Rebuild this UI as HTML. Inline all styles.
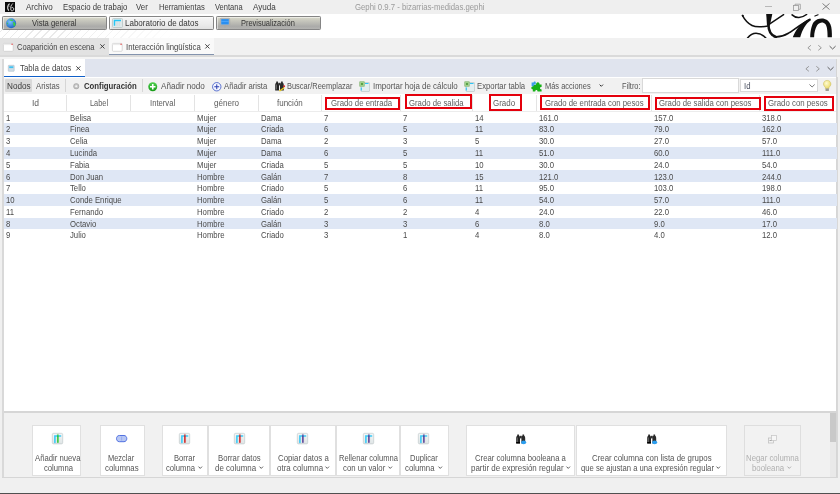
<!DOCTYPE html>
<html><head><meta charset="utf-8"><style>
html,body{margin:0;padding:0;}
body{width:840px;height:494px;position:relative;overflow:hidden;background:#f0f0f0;font-family:"Liberation Sans", sans-serif;}
</style></head><body>
<div style="position:absolute;left:0px;top:0px;width:840px;height:13.5px;background:#efefef;"></div>
<div style="position:absolute;left:0px;top:13.5px;width:840px;height:24px;background:#ffffff;"></div>
<div style="position:absolute;left:0;top:29.8px;width:215px;height:8px;background:repeating-linear-gradient(-45deg,#ffffff 0px,#ffffff 4.6px,#eaeaea 4.6px,#eaeaea 5.6px);-webkit-mask-image:linear-gradient(90deg,#000 0%,#000 25%,transparent 85%);"></div>
<div style="position:absolute;left:5px;top:2px;width:10px;height:10px;background:#0a0a0a;"></div>
<svg style="position:absolute;left:5px;top:2px;overflow:visible" width="10" height="10" viewBox="0 0 10 10"><path d="M4.6 1.6 C2.6 3.2 1.8 6.3 3.8 8.7" stroke="#d8d8d8" stroke-width="1.2" fill="none"/><path d="M7.9 1.4 C6 3 5.1 6 6 8.4 C7 9.6 8.9 8.6 8.8 6.9 C8.7 5.5 7.3 5 6.3 6" stroke="#c8c8c8" stroke-width="1" fill="none"/><path d="M2.5 4.5 L5.5 4" stroke="#999" stroke-width="0.6"/></svg>
<div style="position:absolute;left:25.87px;top:2.32px;font-size:8.6px;line-height:normal;white-space:pre;color:#3c3c3c;font-weight:400;transform-origin:0 0;transform:scaleX(0.9341)">Archivo</div>
<div style="position:absolute;left:62.67px;top:2.32px;font-size:8.6px;line-height:normal;white-space:pre;color:#3c3c3c;font-weight:400;transform-origin:0 0;transform:scaleX(0.9026)">Espacio de trabajo</div>
<div style="position:absolute;left:136.37px;top:2.32px;font-size:8.6px;line-height:normal;white-space:pre;color:#3c3c3c;font-weight:400;transform-origin:0 0;transform:scaleX(0.9195)">Ver</div>
<div style="position:absolute;left:158.78px;top:2.32px;font-size:8.6px;line-height:normal;white-space:pre;color:#3c3c3c;font-weight:400;transform-origin:0 0;transform:scaleX(0.8869)">Herramientas</div>
<div style="position:absolute;left:214.98px;top:2.32px;font-size:8.6px;line-height:normal;white-space:pre;color:#3c3c3c;font-weight:400;transform-origin:0 0;transform:scaleX(0.8762)">Ventana</div>
<div style="position:absolute;left:253.06px;top:2.32px;font-size:8.6px;line-height:normal;white-space:pre;color:#3c3c3c;font-weight:400;transform-origin:0 0;transform:scaleX(0.9447)">Ayuda</div>
<div style="position:absolute;left:355.27px;top:2.32px;font-size:8.6px;line-height:normal;white-space:pre;color:#9a9a9a;font-weight:400;transform-origin:0 0;transform:scaleX(0.9033)">Gephi 0.9.7 - bizarrias-medidas.gephi</div>
<div style="position:absolute;left:765px;top:6.3px;width:6.5px;height:0.8px;background:#b8b8b8;"></div>
<svg style="position:absolute;left:792px;top:3px;overflow:visible" width="10" height="8" viewBox="0 0 10 8"><rect x="1.5" y="2.5" width="5" height="5" fill="none" stroke="#999" stroke-width="0.8"/><path d="M3 2.5 V1.2 H8.3 V6.3 H6.5" fill="none" stroke="#999" stroke-width="0.8"/></svg>
<svg style="position:absolute;left:821.5px;top:3px;overflow:visible" width="8" height="7" viewBox="0 0 8 7"><path d="M0.5 0.5 L7.5 6.5 M7.5 0.5 L0.5 6.5" stroke="#666" stroke-width="0.8"/></svg>
<div style="position:absolute;left:2.2px;top:16.2px;width:104.5px;height:13.5px;box-sizing:border-box;border:1px solid #858585;border-radius:1.2px;background:linear-gradient(#dadacb,#c4c4bb 35%,#ababa9 78%,#b3b3b1);box-shadow:inset 1px 1px 0 rgba(255,255,255,0.5)"></div>
<div style="position:absolute;left:32.48px;top:17.82px;font-size:8.6px;line-height:normal;white-space:pre;color:#353535;font-weight:400;transform-origin:0 0;transform:scaleX(0.8868)">Vista general</div>
<div style="position:absolute;left:108.5px;top:16.2px;width:105.2px;height:13.5px;box-sizing:border-box;border:1px solid #858585;border-radius:1.2px;background:linear-gradient(#f6f6f6,#ececec 60%,#e2e2e2);box-shadow:inset 1px 1px 0 rgba(255,255,255,0.5)"></div>
<div style="position:absolute;left:124.77px;top:17.82px;font-size:8.6px;line-height:normal;white-space:pre;color:#353535;font-weight:400;transform-origin:0 0;transform:scaleX(0.9319)">Laboratorio de datos</div>
<div style="position:absolute;left:215.8px;top:16.2px;width:104.8px;height:13.5px;box-sizing:border-box;border:1px solid #858585;border-radius:1.2px;background:linear-gradient(#dadacb,#c4c4bb 35%,#ababa9 78%,#b3b3b1);box-shadow:inset 1px 1px 0 rgba(255,255,255,0.5)"></div>
<div style="position:absolute;left:241.18px;top:17.82px;font-size:8.6px;line-height:normal;white-space:pre;color:#353535;font-weight:400;transform-origin:0 0;transform:scaleX(0.8670)">Previsualización</div>
<svg style="position:absolute;left:5.6px;top:17.7px;overflow:visible" width="10.2" height="10.5" viewBox="0 0 10.2 10.5"><defs><radialGradient id="gl" cx="0.4" cy="0.35" r="0.7"><stop offset="0" stop-color="#7cc4ff"/><stop offset="1" stop-color="#1560c0"/></radialGradient></defs><circle cx="5.1" cy="5.25" r="5" fill="url(#gl)"/><path d="M3 2 C4.5 1.2 6.5 1.5 7.5 2.6 C6.5 3.2 5 3 3 2Z M7 4 C8.5 4 9.5 5 9.6 6.5 C9 8 8 8.6 7.5 8 C7.8 6.5 7 5.5 7 4Z M1 4.5 C2 4.8 2.5 5.5 2 6.5 C1.2 6 1 5.3 1 4.5Z" fill="#3fcf3f"/></svg>
<svg style="position:absolute;left:112px;top:18px;overflow:visible" width="11" height="10" viewBox="0 0 11 10"><rect x="0.5" y="0.5" width="10" height="9" rx="1" fill="#dfe9ea" stroke="#b9c4c4" stroke-width="0.8"/><path d="M2.5 7.8 V2.5 H9" stroke="#26c6f5" stroke-width="1.4" fill="none"/><path d="M5 4 V8 M7.2 4 V8" stroke="#c8d4d6" stroke-width="0.6"/></svg>
<svg style="position:absolute;left:219.9px;top:18.2px;overflow:visible" width="10" height="10.5" viewBox="0 0 10 10.5"><rect x="0.3" y="0.3" width="9.4" height="7" rx="0.8" fill="#bfbfbf" stroke="#9a9a9a" stroke-width="0.5"/><rect x="1.2" y="1.1" width="7.6" height="5.4" fill="#2a8ff0"/><path d="M1.2 3.5 H8.8" stroke="#5fb0ff" stroke-width="0.6"/><path d="M4 7.3 L4.5 9.5 H5.5 L6 7.3" fill="#a8a8a8"/></svg>
<svg style="position:absolute;left:730px;top:13.5px" width="110" height="24" viewBox="730 13.5 110 24">
<g fill="none" stroke="#111" stroke-linecap="round">
<path d="M742.4 14.9 C744.5 19 748 23 752 25 C756 27 762 26.5 768 25.5" stroke-width="1.45"/><circle cx="742.8" cy="15.2" r="1" fill="#111" stroke="none"/>
<path d="M747.6 37.5 C750 34.5 753 32.8 756 32.8 C760 32.8 763 34.5 765.8 37.5" stroke-width="1.6"/>
<path d="M768.4 20 C768 28 770 35 776 36.4" stroke-width="2.5"/><path d="M774 36.2 C782 37.2 786 34 790 31.8 C797 27 803 22 810 18.9" stroke-width="1.6"/>
<path d="M783.6 14.2 L769.4 23.6" stroke-width="1.45"/>
<path d="M792.1 14.4 C794 16.3 797 17.1 799 17 C802 16.8 804.5 15.6 806.6 14.0" stroke-width="1.5"/>
<path d="M814.9 15.6 L818.1 14.3" stroke-width="1.1"/>
</g>
<path d="M766.2 13.5 L772.3 13.5 L769.9 25 L767 25 Z" fill="#111"/>
<path d="M792.8 36.8 C795.5 30 799.5 23.5 809.5 18.1 L810.8 19.8 C805.5 23.5 802.5 29 800.2 36.8 Z" fill="#111"/>
<path d="M810.2 36.7 C810.4 30 811.8 24 813.8 21.5 C815.8 19 818.8 17.9 821.8 17.9 C825.8 17.9 829 20 830.5 24 C831.8 27 832.0 32 831.9 36.7 L827.6 36.7 C827.6 31 827.2 26 825.5 23.8 C824.5 22.5 823 22 822 22 C820.5 22 818.5 22.8 817 25 C815.3 28 814.2 32 814.1 36.7 Z" fill="#111"/>
</svg>
<div style="position:absolute;left:0px;top:37.5px;width:840px;height:17.5px;background:#f1f1f1;"></div>
<div style="position:absolute;left:0px;top:37.5px;width:109px;height:17.4px;background:#e2e2e2;"></div>
<div style="position:absolute;left:109px;top:37.5px;width:105px;height:17.4px;background:#f9f9f9;"></div>
<div style="position:absolute;left:109px;top:53.6px;width:105px;height:1.7px;background:#8393ad;"></div>
<div style="position:absolute;left:0px;top:54.9px;width:840px;height:2.1px;background:#dadada;"></div>
<div style="position:absolute;left:0px;top:57.0px;width:840px;height:2.2px;background:#f4f4f4;"></div>
<svg style="position:absolute;left:3.4px;top:42.6px;overflow:visible" width="10.6" height="8.7" viewBox="0 0 10.6 8.7"><rect x="0.4" y="0.4" width="9.8" height="7.9" rx="0.9" fill="#fff" stroke="#c9c9c9" stroke-width="0.7"/><rect x="0.8" y="0.8" width="9" height="1.3" fill="#ececec"/><rect x="8.3" y="0.6" width="1.7" height="1.4" fill="#e98080"/></svg>
<svg style="position:absolute;left:112.2px;top:42.6px;overflow:visible" width="10.6" height="8.7" viewBox="0 0 10.6 8.7"><rect x="0.4" y="0.4" width="9.8" height="7.9" rx="0.9" fill="#fff" stroke="#c9c9c9" stroke-width="0.7"/><rect x="0.8" y="0.8" width="9" height="1.3" fill="#ececec"/><rect x="8.3" y="0.6" width="1.7" height="1.4" fill="#e98080"/></svg>
<div style="position:absolute;left:16.88px;top:42.02px;font-size:8.6px;line-height:normal;white-space:pre;color:#444;font-weight:400;transform-origin:0 0;transform:scaleX(0.8821)">Coaparición en escena</div>
<div style="position:absolute;left:125.97px;top:42.02px;font-size:8.6px;line-height:normal;white-space:pre;color:#444;font-weight:400;transform-origin:0 0;transform:scaleX(0.9046)">Interacción lingüística</div>
<svg style="position:absolute;left:99.8px;top:44.2px;overflow:visible" width="4.8" height="4.8" viewBox="0 0 4.8 4.8"><path d="M0.3 0.3 L4.5 4.5 M4.5 0.3 L0.3 4.5" stroke="#333" stroke-width="0.9"/></svg>
<svg style="position:absolute;left:205.3px;top:44.2px;overflow:visible" width="4.8" height="4.8" viewBox="0 0 4.8 4.8"><path d="M0.3 0.3 L4.5 4.5 M4.5 0.3 L0.3 4.5" stroke="#333" stroke-width="0.9"/></svg>
<svg style="position:absolute;left:807.2px;top:44.6px;overflow:visible" width="30" height="6" viewBox="0 0 30 6"><path d="M3.9 0.3 L0.9 2.8 L3.9 5.3 M11.3 0.3 L14.3 2.8 L11.3 5.3" stroke="#8a8a8a" stroke-width="0.85" fill="none"/><path d="M22.6 1.1 L25.6 4.0 L28.6 1.1" stroke="#555" stroke-width="0.95" fill="none"/></svg>
<div style="position:absolute;left:2.0px;top:59.2px;width:835px;height:418.3px;background:#ffffff;border-left:1px solid #dcdcdc;border-right:1px solid #d6d6d6;box-sizing:border-box;"></div>
<div style="position:absolute;left:3px;top:59.2px;width:833px;height:17.8px;background:#e0e4ee;"></div>
<div style="position:absolute;left:3px;top:59.2px;width:82px;height:16.8px;background:#ffffff;"></div>
<div style="position:absolute;left:3px;top:75.8px;width:82px;height:1.7px;background:#0f5fc8;"></div>
<svg style="position:absolute;left:7.7px;top:65px;overflow:visible" width="6.5" height="6.6" viewBox="0 0 6.5 6.6"><rect x="0.3" y="0.3" width="5.9" height="6" rx="0.5" fill="#cfdde6" stroke="#9fb3bf" stroke-width="0.5"/><rect x="1.2" y="1.3" width="4.1" height="1.8" fill="#3fc2f2"/></svg>
<div style="position:absolute;left:19.77px;top:63.22px;font-size:8.6px;line-height:normal;white-space:pre;color:#444;font-weight:400;transform-origin:0 0;transform:scaleX(0.9170)">Tabla de datos</div>
<svg style="position:absolute;left:76.3px;top:65.8px;overflow:visible" width="4.7" height="4.7" viewBox="0 0 4.7 4.7"><path d="M0.3 0.3 L4.4 4.4 M4.4 0.3 L0.3 4.4" stroke="#333" stroke-width="0.9"/></svg>
<svg style="position:absolute;left:804.8px;top:66.4px;overflow:visible" width="30" height="6" viewBox="0 0 30 6"><path d="M3.9 0.3 L0.9 2.8 L3.9 5.3 M11.3 0.3 L14.3 2.8 L11.3 5.3" stroke="#8a8a8a" stroke-width="0.85" fill="none"/><path d="M22.6 1.1 L25.6 4.0 L28.6 1.1" stroke="#555" stroke-width="0.95" fill="none"/></svg>
<div style="position:absolute;left:3px;top:77.5px;width:833px;height:16.5px;background:#f1f1f1;"></div>
<div style="position:absolute;left:3px;top:93.6px;width:833px;height:0.8px;background:#d9d9d9;"></div>
<div style="position:absolute;left:5px;top:78.5px;width:26.8px;height:13.4px;background:#d9d9d9;border-radius:1px;"></div>
<div style="position:absolute;left:6.56px;top:81.02px;font-size:8.6px;line-height:normal;white-space:pre;color:#3a3a3a;font-weight:400;transform-origin:0 0;transform:scaleX(0.9531)">Nodos</div>
<div style="position:absolute;left:36.37px;top:80.82px;font-size:8.6px;line-height:normal;white-space:pre;color:#555;font-weight:400;transform-origin:0 0;transform:scaleX(0.9005)">Aristas</div>
<div style="position:absolute;left:65.0px;top:79px;width:0.8px;height:12.6px;background:#d6d6d6;"></div>
<div style="position:absolute;left:141.6px;top:79px;width:0.8px;height:12.6px;background:#d6d6d6;"></div>
<svg style="position:absolute;left:72.6px;top:83px;overflow:visible" width="6.5" height="6.5" viewBox="0 0 6.5 6.5"><circle cx="3.25" cy="3.25" r="2.9" fill="#a9a9a9"/><circle cx="3.25" cy="3.25" r="2.2" fill="#c4c4c4"/><circle cx="3.25" cy="3.25" r="1.1" fill="#f4f4f4"/></svg>
<div style="position:absolute;left:83.67px;top:81.02px;font-size:8.6px;line-height:normal;white-space:pre;color:#333;font-weight:700;transform-origin:0 0;transform:scaleX(0.9040)">Configuración</div>
<svg style="position:absolute;left:147.5px;top:81.8px;overflow:visible" width="9.5" height="9.5" viewBox="0 0 9.5 9.5"><defs><linearGradient id="gg" x1="0" y1="0" x2="0" y2="1"><stop offset="0" stop-color="#4fd04f"/><stop offset="1" stop-color="#169a16"/></linearGradient></defs><circle cx="4.75" cy="4.75" r="4.5" fill="url(#gg)"/><path d="M4.75 2 V7.5 M2 4.75 H7.5" stroke="#fff" stroke-width="1.6"/></svg>
<div style="position:absolute;left:160.56px;top:81.22px;font-size:8.6px;line-height:normal;white-space:pre;color:#555;font-weight:400;transform-origin:0 0;transform:scaleX(0.9466)">Añadir nodo</div>
<svg style="position:absolute;left:211.8px;top:81.7px;overflow:visible" width="9.5" height="9.5" viewBox="0 0 9.5 9.5"><circle cx="4.75" cy="4.75" r="4.2" fill="#f4f6ff" stroke="#4a63c9" stroke-width="0.9"/><path d="M4.75 2.3 V7.2 M2.3 4.75 H7.2" stroke="#2b3fb0" stroke-width="1"/></svg>
<div style="position:absolute;left:224.48px;top:81.22px;font-size:8.6px;line-height:normal;white-space:pre;color:#555;font-weight:400;transform-origin:0 0;transform:scaleX(0.8965)">Añadir arista</div>
<svg style="position:absolute;left:274.6px;top:80.6px;overflow:visible" width="11" height="11" viewBox="0 0 11 11"><path d="M0.2 9.4 V4.2 C0.2 2.8 0.8 2 1.3 1.4 V0.5 H2.9 V1.4 C3.5 2 4 2.8 4 4.2 V9.4 Z" fill="#222"/><path d="M5.0 9.4 V4.2 C5.0 2.8 5.6 2 6.1 1.4 V0.5 H7.7 V1.4 C8.3 2 8.8 2.8 8.8 4.2 V9.4 Z" fill="#2a2a2a"/><rect x="3.6" y="1.8" width="1.8" height="2.6" fill="#333"/><rect x="0.8" y="3.5" width="1" height="5" fill="#777"/><path d="M3.8 9.8 L8.6 6.2 L9.6 7.3 L5 10.4 Z" fill="#e6c820"/><circle cx="9.2" cy="5.2" r="0.95" fill="#e02a2a"/></svg>
<div style="position:absolute;left:287.38px;top:81.22px;font-size:8.6px;line-height:normal;white-space:pre;color:#555;font-weight:400;transform-origin:0 0;transform:scaleX(0.8671)">Buscar/Reemplazar</div>
<svg style="position:absolute;left:358.9px;top:81px;overflow:visible" width="11" height="11" viewBox="0 0 11 11"><rect x="2" y="1.5" width="8.5" height="9" rx="0.6" fill="#e3eef0" stroke="#aab8bb" stroke-width="0.5"/><rect x="0.5" y="0.5" width="5" height="5" rx="0.6" fill="#9fd08a" stroke="#7aa86a" stroke-width="0.4"/><circle cx="3" cy="3" r="0.9" fill="#3a8a2a"/><path d="M6 2.5 H9.5 M2.3 6.5 V9.5" stroke="#2ec4f4" stroke-width="1.1"/></svg>
<div style="position:absolute;left:372.77px;top:81.22px;font-size:8.6px;line-height:normal;white-space:pre;color:#555;font-weight:400;transform-origin:0 0;transform:scaleX(0.9242)">Importar hoja de cálculo</div>
<svg style="position:absolute;left:463.6px;top:81px;overflow:visible" width="11" height="11" viewBox="0 0 11 11"><rect x="2" y="1.5" width="8.5" height="9" rx="0.6" fill="#e3eef0" stroke="#aab8bb" stroke-width="0.5"/><rect x="0.5" y="0.5" width="5" height="5" rx="0.6" fill="#9fd08a" stroke="#7aa86a" stroke-width="0.4"/><circle cx="3" cy="3" r="0.9" fill="#3a8a2a"/><path d="M6 2.5 H9.5 M2.3 6.5 V9.5" stroke="#2ec4f4" stroke-width="1.1"/></svg>
<div style="position:absolute;left:476.78px;top:81.22px;font-size:8.6px;line-height:normal;white-space:pre;color:#555;font-weight:400;transform-origin:0 0;transform:scaleX(0.9000)">Exportar tabla</div>
<svg style="position:absolute;left:531.3px;top:80.5px;overflow:visible" width="11" height="11" viewBox="0 0 11 11"><path d="M3 3.8 H5 C5 2.3 5.8 1.3 6.9 1.3 C8 1.3 8.6 2.3 8.6 3.4 H10.6 V6 C9.6 6 9 6.5 9 7.3 C9 8 9.6 8.5 10.6 8.5 V10.6 H6.6 C6.6 9.6 6.1 9 5.4 9 C4.7 9 4.2 9.6 4.2 10.6 H1.8 V8.3 C0.9 8.3 0.3 7.7 0.3 6.9 C0.3 6.1 0.9 5.5 1.8 5.5 V3.8 Z" fill="#17b117"/><path d="M0.6 1.6 H2.6 C2.6 0.9 3.1 0.4 3.7 0.4 C4.3 0.4 4.8 0.9 4.8 1.6 V3.6 H2.8 V5.2 H0.6 Z" fill="#3d9ee9"/></svg>
<div style="position:absolute;left:545.28px;top:81.22px;font-size:8.6px;line-height:normal;white-space:pre;color:#555;font-weight:400;transform-origin:0 0;transform:scaleX(0.8686)">Más acciones</div>
<svg style="position:absolute;left:599px;top:84.3px;overflow:visible" width="5" height="3" viewBox="0 0 5 3"><path d="M0.6 0.6 L2.3 2.3 L4 0.6" stroke="#333" stroke-width="1" fill="none"/></svg>
<div style="position:absolute;left:622.18px;top:81.22px;font-size:8.6px;line-height:normal;white-space:pre;color:#555;font-weight:400;transform-origin:0 0;transform:scaleX(0.8625)">Filtro:</div>
<div style="position:absolute;left:641.5px;top:78.1px;width:97.2px;height:15.1px;background:#ffffff;border:1px solid #d9d9d9;box-sizing:border-box;"></div>
<div style="position:absolute;left:739.5px;top:79.3px;width:78.5px;height:12.4px;background:#ffffff;border:1px solid #d9d9d9;box-sizing:border-box;"></div>
<div style="position:absolute;left:743.98px;top:80.92px;font-size:8.6px;line-height:normal;white-space:pre;color:#4a5060;font-weight:400;transform-origin:0 0;transform:scaleX(0.8999)">Id</div>
<svg style="position:absolute;left:809.3px;top:83.6px;overflow:visible" width="6.2" height="3.5" viewBox="0 0 6.2 3.5"><path d="M0.5 0.5 L3.1 3 L5.7 0.5" stroke="#555" stroke-width="0.8" fill="none"/></svg>
<svg style="position:absolute;left:823px;top:80px;overflow:visible" width="8.5" height="12" viewBox="0 0 8.5 12"><defs><radialGradient id="bl" cx="0.4" cy="0.35" r="0.7"><stop offset="0" stop-color="#fffbd0"/><stop offset="1" stop-color="#e8d860"/></radialGradient></defs><path d="M4.2 0.4 C6.4 0.4 7.9 2 7.9 4 C7.9 5.6 6.6 6.6 6 7.6 V8.6 H2.4 V7.6 C1.8 6.6 0.5 5.6 0.5 4 C0.5 2 2 0.4 4.2 0.4 Z" fill="url(#bl)" stroke="#c8b850" stroke-width="0.5"/><rect x="2.5" y="8.6" width="3.4" height="2.4" rx="0.5" fill="#9a9a90"/></svg>
<div style="position:absolute;left:3px;top:94.4px;width:833px;height:16.4px;background:#ffffff;"></div>
<div style="position:absolute;left:66.39999999999999px;top:95px;width:0.8px;height:15.5px;background:#e3e3e3;"></div>
<div style="position:absolute;left:130.2px;top:95px;width:0.8px;height:15.5px;background:#e3e3e3;"></div>
<div style="position:absolute;left:194.0px;top:95px;width:0.8px;height:15.5px;background:#e3e3e3;"></div>
<div style="position:absolute;left:257.6px;top:95px;width:0.8px;height:15.5px;background:#e3e3e3;"></div>
<div style="position:absolute;left:321.3px;top:95px;width:0.8px;height:15.5px;background:#e3e3e3;"></div>
<div style="position:absolute;left:400.3px;top:95px;width:0.8px;height:15.5px;background:#e3e3e3;"></div>
<div style="position:absolute;left:472.40000000000003px;top:95px;width:0.8px;height:15.5px;background:#e3e3e3;"></div>
<div style="position:absolute;left:535.6px;top:95px;width:0.8px;height:15.5px;background:#e3e3e3;"></div>
<div style="position:absolute;left:650.5px;top:95px;width:0.8px;height:15.5px;background:#e3e3e3;"></div>
<div style="position:absolute;left:758.6px;top:95px;width:0.8px;height:15.5px;background:#e3e3e3;"></div>
<div style="position:absolute;left:3px;top:110.6px;width:833px;height:0.6px;background:#ececec;"></div>
<div style="position:absolute;left:32.15px;top:97.82px;font-size:8.6px;line-height:normal;white-space:pre;color:#5c5c5c;font-weight:400;transform-origin:0 0;transform:scaleX(0.9899)">Id</div>
<div style="position:absolute;left:90.23px;top:97.82px;font-size:8.6px;line-height:normal;white-space:pre;color:#5c5c5c;font-weight:400;transform-origin:0 0;transform:scaleX(0.8623)">Label</div>
<div style="position:absolute;left:150.23px;top:97.82px;font-size:8.6px;line-height:normal;white-space:pre;color:#5c5c5c;font-weight:400;transform-origin:0 0;transform:scaleX(0.8923)">Interval</div>
<div style="position:absolute;left:214.07px;top:97.82px;font-size:8.6px;line-height:normal;white-space:pre;color:#5c5c5c;font-weight:400;transform-origin:0 0;transform:scaleX(0.9368)">género</div>
<div style="position:absolute;left:277.42px;top:97.82px;font-size:8.6px;line-height:normal;white-space:pre;color:#5c5c5c;font-weight:400;transform-origin:0 0;transform:scaleX(0.9298)">función</div>
<div style="position:absolute;left:331.02px;top:97.82px;font-size:8.6px;line-height:normal;white-space:pre;color:#5c5c5c;font-weight:400;transform-origin:0 0;transform:scaleX(0.9078)">Grado de entrada</div>
<div style="position:absolute;left:409.37px;top:97.82px;font-size:8.6px;line-height:normal;white-space:pre;color:#5c5c5c;font-weight:400;transform-origin:0 0;transform:scaleX(0.9007)">Grado de salida</div>
<div style="position:absolute;left:493.47px;top:97.82px;font-size:8.6px;line-height:normal;white-space:pre;color:#5c5c5c;font-weight:400;transform-origin:0 0;transform:scaleX(0.9237)">Grado</div>
<div style="position:absolute;left:544.62px;top:97.82px;font-size:8.6px;line-height:normal;white-space:pre;color:#5c5c5c;font-weight:400;transform-origin:0 0;transform:scaleX(0.9047)">Grado de entrada con pesos</div>
<div style="position:absolute;left:659.32px;top:97.82px;font-size:8.6px;line-height:normal;white-space:pre;color:#5c5c5c;font-weight:400;transform-origin:0 0;transform:scaleX(0.9033)">Grado de salida con pesos</div>
<div style="position:absolute;left:768.02px;top:97.82px;font-size:8.6px;line-height:normal;white-space:pre;color:#5c5c5c;font-weight:400;transform-origin:0 0;transform:scaleX(0.9130)">Grado con pesos</div>
<div style="position:absolute;left:5.78px;top:112.57px;font-size:8.6px;line-height:normal;white-space:pre;color:#4a4a4a;font-weight:400;transform-origin:0 0;transform:scaleX(0.9000)">1</div>
<div style="position:absolute;left:69.58px;top:112.57px;font-size:8.6px;line-height:normal;white-space:pre;color:#4a4a4a;font-weight:400;transform-origin:0 0;transform:scaleX(0.9000)">Belisa</div>
<div style="position:absolute;left:197.18px;top:112.57px;font-size:8.6px;line-height:normal;white-space:pre;color:#4a4a4a;font-weight:400;transform-origin:0 0;transform:scaleX(0.9000)">Mujer</div>
<div style="position:absolute;left:260.77px;top:112.57px;font-size:8.6px;line-height:normal;white-space:pre;color:#4a4a4a;font-weight:400;transform-origin:0 0;transform:scaleX(0.9000)">Dama</div>
<div style="position:absolute;left:324.47px;top:112.57px;font-size:8.6px;line-height:normal;white-space:pre;color:#4a4a4a;font-weight:400;transform-origin:0 0;transform:scaleX(0.9000)">7</div>
<div style="position:absolute;left:403.47px;top:112.57px;font-size:8.6px;line-height:normal;white-space:pre;color:#4a4a4a;font-weight:400;transform-origin:0 0;transform:scaleX(0.9000)">7</div>
<div style="position:absolute;left:474.57px;top:112.57px;font-size:8.6px;line-height:normal;white-space:pre;color:#4a4a4a;font-weight:400;transform-origin:0 0;transform:scaleX(0.9000)">14</div>
<div style="position:absolute;left:538.77px;top:112.57px;font-size:8.6px;line-height:normal;white-space:pre;color:#4a4a4a;font-weight:400;transform-origin:0 0;transform:scaleX(0.9000)">161.0</div>
<div style="position:absolute;left:653.67px;top:112.57px;font-size:8.6px;line-height:normal;white-space:pre;color:#4a4a4a;font-weight:400;transform-origin:0 0;transform:scaleX(0.9000)">157.0</div>
<div style="position:absolute;left:761.77px;top:112.57px;font-size:8.6px;line-height:normal;white-space:pre;color:#4a4a4a;font-weight:400;transform-origin:0 0;transform:scaleX(0.9000)">318.0</div>
<div style="position:absolute;left:4px;top:123.24000000000001px;width:832.6px;height:11.79px;background:#dfe7f5;"></div>
<div style="position:absolute;left:5.78px;top:124.36px;font-size:8.6px;line-height:normal;white-space:pre;color:#4a4a4a;font-weight:400;transform-origin:0 0;transform:scaleX(0.9000)">2</div>
<div style="position:absolute;left:69.58px;top:124.36px;font-size:8.6px;line-height:normal;white-space:pre;color:#4a4a4a;font-weight:400;transform-origin:0 0;transform:scaleX(0.9000)">Finea</div>
<div style="position:absolute;left:197.18px;top:124.36px;font-size:8.6px;line-height:normal;white-space:pre;color:#4a4a4a;font-weight:400;transform-origin:0 0;transform:scaleX(0.9000)">Mujer</div>
<div style="position:absolute;left:260.77px;top:124.36px;font-size:8.6px;line-height:normal;white-space:pre;color:#4a4a4a;font-weight:400;transform-origin:0 0;transform:scaleX(0.9000)">Criada</div>
<div style="position:absolute;left:324.47px;top:124.36px;font-size:8.6px;line-height:normal;white-space:pre;color:#4a4a4a;font-weight:400;transform-origin:0 0;transform:scaleX(0.9000)">6</div>
<div style="position:absolute;left:403.47px;top:124.36px;font-size:8.6px;line-height:normal;white-space:pre;color:#4a4a4a;font-weight:400;transform-origin:0 0;transform:scaleX(0.9000)">5</div>
<div style="position:absolute;left:474.57px;top:124.36px;font-size:8.6px;line-height:normal;white-space:pre;color:#4a4a4a;font-weight:400;transform-origin:0 0;transform:scaleX(0.9000)">11</div>
<div style="position:absolute;left:538.77px;top:124.36px;font-size:8.6px;line-height:normal;white-space:pre;color:#4a4a4a;font-weight:400;transform-origin:0 0;transform:scaleX(0.9000)">83.0</div>
<div style="position:absolute;left:653.67px;top:124.36px;font-size:8.6px;line-height:normal;white-space:pre;color:#4a4a4a;font-weight:400;transform-origin:0 0;transform:scaleX(0.9000)">79.0</div>
<div style="position:absolute;left:761.77px;top:124.36px;font-size:8.6px;line-height:normal;white-space:pre;color:#4a4a4a;font-weight:400;transform-origin:0 0;transform:scaleX(0.9000)">162.0</div>
<div style="position:absolute;left:5.78px;top:136.15px;font-size:8.6px;line-height:normal;white-space:pre;color:#4a4a4a;font-weight:400;transform-origin:0 0;transform:scaleX(0.9000)">3</div>
<div style="position:absolute;left:69.58px;top:136.15px;font-size:8.6px;line-height:normal;white-space:pre;color:#4a4a4a;font-weight:400;transform-origin:0 0;transform:scaleX(0.9000)">Celia</div>
<div style="position:absolute;left:197.18px;top:136.15px;font-size:8.6px;line-height:normal;white-space:pre;color:#4a4a4a;font-weight:400;transform-origin:0 0;transform:scaleX(0.9000)">Mujer</div>
<div style="position:absolute;left:260.77px;top:136.15px;font-size:8.6px;line-height:normal;white-space:pre;color:#4a4a4a;font-weight:400;transform-origin:0 0;transform:scaleX(0.9000)">Dama</div>
<div style="position:absolute;left:324.47px;top:136.15px;font-size:8.6px;line-height:normal;white-space:pre;color:#4a4a4a;font-weight:400;transform-origin:0 0;transform:scaleX(0.9000)">2</div>
<div style="position:absolute;left:403.47px;top:136.15px;font-size:8.6px;line-height:normal;white-space:pre;color:#4a4a4a;font-weight:400;transform-origin:0 0;transform:scaleX(0.9000)">3</div>
<div style="position:absolute;left:474.57px;top:136.15px;font-size:8.6px;line-height:normal;white-space:pre;color:#4a4a4a;font-weight:400;transform-origin:0 0;transform:scaleX(0.9000)">5</div>
<div style="position:absolute;left:538.77px;top:136.15px;font-size:8.6px;line-height:normal;white-space:pre;color:#4a4a4a;font-weight:400;transform-origin:0 0;transform:scaleX(0.9000)">30.0</div>
<div style="position:absolute;left:653.67px;top:136.15px;font-size:8.6px;line-height:normal;white-space:pre;color:#4a4a4a;font-weight:400;transform-origin:0 0;transform:scaleX(0.9000)">27.0</div>
<div style="position:absolute;left:761.77px;top:136.15px;font-size:8.6px;line-height:normal;white-space:pre;color:#4a4a4a;font-weight:400;transform-origin:0 0;transform:scaleX(0.9000)">57.0</div>
<div style="position:absolute;left:4px;top:146.82px;width:832.6px;height:11.79px;background:#dfe7f5;"></div>
<div style="position:absolute;left:5.78px;top:147.94px;font-size:8.6px;line-height:normal;white-space:pre;color:#4a4a4a;font-weight:400;transform-origin:0 0;transform:scaleX(0.9000)">4</div>
<div style="position:absolute;left:69.58px;top:147.94px;font-size:8.6px;line-height:normal;white-space:pre;color:#4a4a4a;font-weight:400;transform-origin:0 0;transform:scaleX(0.9000)">Lucinda</div>
<div style="position:absolute;left:197.18px;top:147.94px;font-size:8.6px;line-height:normal;white-space:pre;color:#4a4a4a;font-weight:400;transform-origin:0 0;transform:scaleX(0.9000)">Mujer</div>
<div style="position:absolute;left:260.77px;top:147.94px;font-size:8.6px;line-height:normal;white-space:pre;color:#4a4a4a;font-weight:400;transform-origin:0 0;transform:scaleX(0.9000)">Dama</div>
<div style="position:absolute;left:324.47px;top:147.94px;font-size:8.6px;line-height:normal;white-space:pre;color:#4a4a4a;font-weight:400;transform-origin:0 0;transform:scaleX(0.9000)">6</div>
<div style="position:absolute;left:403.47px;top:147.94px;font-size:8.6px;line-height:normal;white-space:pre;color:#4a4a4a;font-weight:400;transform-origin:0 0;transform:scaleX(0.9000)">5</div>
<div style="position:absolute;left:474.57px;top:147.94px;font-size:8.6px;line-height:normal;white-space:pre;color:#4a4a4a;font-weight:400;transform-origin:0 0;transform:scaleX(0.9000)">11</div>
<div style="position:absolute;left:538.77px;top:147.94px;font-size:8.6px;line-height:normal;white-space:pre;color:#4a4a4a;font-weight:400;transform-origin:0 0;transform:scaleX(0.9000)">51.0</div>
<div style="position:absolute;left:653.67px;top:147.94px;font-size:8.6px;line-height:normal;white-space:pre;color:#4a4a4a;font-weight:400;transform-origin:0 0;transform:scaleX(0.9000)">60.0</div>
<div style="position:absolute;left:761.77px;top:147.94px;font-size:8.6px;line-height:normal;white-space:pre;color:#4a4a4a;font-weight:400;transform-origin:0 0;transform:scaleX(0.9000)">111.0</div>
<div style="position:absolute;left:5.78px;top:159.73px;font-size:8.6px;line-height:normal;white-space:pre;color:#4a4a4a;font-weight:400;transform-origin:0 0;transform:scaleX(0.9000)">5</div>
<div style="position:absolute;left:69.58px;top:159.73px;font-size:8.6px;line-height:normal;white-space:pre;color:#4a4a4a;font-weight:400;transform-origin:0 0;transform:scaleX(0.9000)">Fabia</div>
<div style="position:absolute;left:197.18px;top:159.73px;font-size:8.6px;line-height:normal;white-space:pre;color:#4a4a4a;font-weight:400;transform-origin:0 0;transform:scaleX(0.9000)">Mujer</div>
<div style="position:absolute;left:260.77px;top:159.73px;font-size:8.6px;line-height:normal;white-space:pre;color:#4a4a4a;font-weight:400;transform-origin:0 0;transform:scaleX(0.9000)">Criada</div>
<div style="position:absolute;left:324.47px;top:159.73px;font-size:8.6px;line-height:normal;white-space:pre;color:#4a4a4a;font-weight:400;transform-origin:0 0;transform:scaleX(0.9000)">5</div>
<div style="position:absolute;left:403.47px;top:159.73px;font-size:8.6px;line-height:normal;white-space:pre;color:#4a4a4a;font-weight:400;transform-origin:0 0;transform:scaleX(0.9000)">5</div>
<div style="position:absolute;left:474.57px;top:159.73px;font-size:8.6px;line-height:normal;white-space:pre;color:#4a4a4a;font-weight:400;transform-origin:0 0;transform:scaleX(0.9000)">10</div>
<div style="position:absolute;left:538.77px;top:159.73px;font-size:8.6px;line-height:normal;white-space:pre;color:#4a4a4a;font-weight:400;transform-origin:0 0;transform:scaleX(0.9000)">30.0</div>
<div style="position:absolute;left:653.67px;top:159.73px;font-size:8.6px;line-height:normal;white-space:pre;color:#4a4a4a;font-weight:400;transform-origin:0 0;transform:scaleX(0.9000)">24.0</div>
<div style="position:absolute;left:761.77px;top:159.73px;font-size:8.6px;line-height:normal;white-space:pre;color:#4a4a4a;font-weight:400;transform-origin:0 0;transform:scaleX(0.9000)">54.0</div>
<div style="position:absolute;left:4px;top:170.4px;width:832.6px;height:11.79px;background:#dfe7f5;"></div>
<div style="position:absolute;left:5.78px;top:171.52px;font-size:8.6px;line-height:normal;white-space:pre;color:#4a4a4a;font-weight:400;transform-origin:0 0;transform:scaleX(0.9000)">6</div>
<div style="position:absolute;left:69.58px;top:171.52px;font-size:8.6px;line-height:normal;white-space:pre;color:#4a4a4a;font-weight:400;transform-origin:0 0;transform:scaleX(0.9000)">Don Juan</div>
<div style="position:absolute;left:197.18px;top:171.52px;font-size:8.6px;line-height:normal;white-space:pre;color:#4a4a4a;font-weight:400;transform-origin:0 0;transform:scaleX(0.9000)">Hombre</div>
<div style="position:absolute;left:260.77px;top:171.52px;font-size:8.6px;line-height:normal;white-space:pre;color:#4a4a4a;font-weight:400;transform-origin:0 0;transform:scaleX(0.9000)">Galán</div>
<div style="position:absolute;left:324.47px;top:171.52px;font-size:8.6px;line-height:normal;white-space:pre;color:#4a4a4a;font-weight:400;transform-origin:0 0;transform:scaleX(0.9000)">7</div>
<div style="position:absolute;left:403.47px;top:171.52px;font-size:8.6px;line-height:normal;white-space:pre;color:#4a4a4a;font-weight:400;transform-origin:0 0;transform:scaleX(0.9000)">8</div>
<div style="position:absolute;left:474.57px;top:171.52px;font-size:8.6px;line-height:normal;white-space:pre;color:#4a4a4a;font-weight:400;transform-origin:0 0;transform:scaleX(0.9000)">15</div>
<div style="position:absolute;left:538.77px;top:171.52px;font-size:8.6px;line-height:normal;white-space:pre;color:#4a4a4a;font-weight:400;transform-origin:0 0;transform:scaleX(0.9000)">121.0</div>
<div style="position:absolute;left:653.67px;top:171.52px;font-size:8.6px;line-height:normal;white-space:pre;color:#4a4a4a;font-weight:400;transform-origin:0 0;transform:scaleX(0.9000)">123.0</div>
<div style="position:absolute;left:761.77px;top:171.52px;font-size:8.6px;line-height:normal;white-space:pre;color:#4a4a4a;font-weight:400;transform-origin:0 0;transform:scaleX(0.9000)">244.0</div>
<div style="position:absolute;left:5.78px;top:183.31px;font-size:8.6px;line-height:normal;white-space:pre;color:#4a4a4a;font-weight:400;transform-origin:0 0;transform:scaleX(0.9000)">7</div>
<div style="position:absolute;left:69.58px;top:183.31px;font-size:8.6px;line-height:normal;white-space:pre;color:#4a4a4a;font-weight:400;transform-origin:0 0;transform:scaleX(0.9000)">Tello</div>
<div style="position:absolute;left:197.18px;top:183.31px;font-size:8.6px;line-height:normal;white-space:pre;color:#4a4a4a;font-weight:400;transform-origin:0 0;transform:scaleX(0.9000)">Hombre</div>
<div style="position:absolute;left:260.77px;top:183.31px;font-size:8.6px;line-height:normal;white-space:pre;color:#4a4a4a;font-weight:400;transform-origin:0 0;transform:scaleX(0.9000)">Criado</div>
<div style="position:absolute;left:324.47px;top:183.31px;font-size:8.6px;line-height:normal;white-space:pre;color:#4a4a4a;font-weight:400;transform-origin:0 0;transform:scaleX(0.9000)">5</div>
<div style="position:absolute;left:403.47px;top:183.31px;font-size:8.6px;line-height:normal;white-space:pre;color:#4a4a4a;font-weight:400;transform-origin:0 0;transform:scaleX(0.9000)">6</div>
<div style="position:absolute;left:474.57px;top:183.31px;font-size:8.6px;line-height:normal;white-space:pre;color:#4a4a4a;font-weight:400;transform-origin:0 0;transform:scaleX(0.9000)">11</div>
<div style="position:absolute;left:538.77px;top:183.31px;font-size:8.6px;line-height:normal;white-space:pre;color:#4a4a4a;font-weight:400;transform-origin:0 0;transform:scaleX(0.9000)">95.0</div>
<div style="position:absolute;left:653.67px;top:183.31px;font-size:8.6px;line-height:normal;white-space:pre;color:#4a4a4a;font-weight:400;transform-origin:0 0;transform:scaleX(0.9000)">103.0</div>
<div style="position:absolute;left:761.77px;top:183.31px;font-size:8.6px;line-height:normal;white-space:pre;color:#4a4a4a;font-weight:400;transform-origin:0 0;transform:scaleX(0.9000)">198.0</div>
<div style="position:absolute;left:4px;top:193.98000000000002px;width:832.6px;height:11.79px;background:#dfe7f5;"></div>
<div style="position:absolute;left:5.78px;top:195.10px;font-size:8.6px;line-height:normal;white-space:pre;color:#4a4a4a;font-weight:400;transform-origin:0 0;transform:scaleX(0.9000)">10</div>
<div style="position:absolute;left:69.58px;top:195.10px;font-size:8.6px;line-height:normal;white-space:pre;color:#4a4a4a;font-weight:400;transform-origin:0 0;transform:scaleX(0.9000)">Conde Enrique</div>
<div style="position:absolute;left:197.18px;top:195.10px;font-size:8.6px;line-height:normal;white-space:pre;color:#4a4a4a;font-weight:400;transform-origin:0 0;transform:scaleX(0.9000)">Hombre</div>
<div style="position:absolute;left:260.77px;top:195.10px;font-size:8.6px;line-height:normal;white-space:pre;color:#4a4a4a;font-weight:400;transform-origin:0 0;transform:scaleX(0.9000)">Galán</div>
<div style="position:absolute;left:324.47px;top:195.10px;font-size:8.6px;line-height:normal;white-space:pre;color:#4a4a4a;font-weight:400;transform-origin:0 0;transform:scaleX(0.9000)">5</div>
<div style="position:absolute;left:403.47px;top:195.10px;font-size:8.6px;line-height:normal;white-space:pre;color:#4a4a4a;font-weight:400;transform-origin:0 0;transform:scaleX(0.9000)">6</div>
<div style="position:absolute;left:474.57px;top:195.10px;font-size:8.6px;line-height:normal;white-space:pre;color:#4a4a4a;font-weight:400;transform-origin:0 0;transform:scaleX(0.9000)">11</div>
<div style="position:absolute;left:538.77px;top:195.10px;font-size:8.6px;line-height:normal;white-space:pre;color:#4a4a4a;font-weight:400;transform-origin:0 0;transform:scaleX(0.9000)">54.0</div>
<div style="position:absolute;left:653.67px;top:195.10px;font-size:8.6px;line-height:normal;white-space:pre;color:#4a4a4a;font-weight:400;transform-origin:0 0;transform:scaleX(0.9000)">57.0</div>
<div style="position:absolute;left:761.77px;top:195.10px;font-size:8.6px;line-height:normal;white-space:pre;color:#4a4a4a;font-weight:400;transform-origin:0 0;transform:scaleX(0.9000)">111.0</div>
<div style="position:absolute;left:5.78px;top:206.89px;font-size:8.6px;line-height:normal;white-space:pre;color:#4a4a4a;font-weight:400;transform-origin:0 0;transform:scaleX(0.9000)">11</div>
<div style="position:absolute;left:69.58px;top:206.89px;font-size:8.6px;line-height:normal;white-space:pre;color:#4a4a4a;font-weight:400;transform-origin:0 0;transform:scaleX(0.9000)">Fernando</div>
<div style="position:absolute;left:197.18px;top:206.89px;font-size:8.6px;line-height:normal;white-space:pre;color:#4a4a4a;font-weight:400;transform-origin:0 0;transform:scaleX(0.9000)">Hombre</div>
<div style="position:absolute;left:260.77px;top:206.89px;font-size:8.6px;line-height:normal;white-space:pre;color:#4a4a4a;font-weight:400;transform-origin:0 0;transform:scaleX(0.9000)">Criado</div>
<div style="position:absolute;left:324.47px;top:206.89px;font-size:8.6px;line-height:normal;white-space:pre;color:#4a4a4a;font-weight:400;transform-origin:0 0;transform:scaleX(0.9000)">2</div>
<div style="position:absolute;left:403.47px;top:206.89px;font-size:8.6px;line-height:normal;white-space:pre;color:#4a4a4a;font-weight:400;transform-origin:0 0;transform:scaleX(0.9000)">2</div>
<div style="position:absolute;left:474.57px;top:206.89px;font-size:8.6px;line-height:normal;white-space:pre;color:#4a4a4a;font-weight:400;transform-origin:0 0;transform:scaleX(0.9000)">4</div>
<div style="position:absolute;left:538.77px;top:206.89px;font-size:8.6px;line-height:normal;white-space:pre;color:#4a4a4a;font-weight:400;transform-origin:0 0;transform:scaleX(0.9000)">24.0</div>
<div style="position:absolute;left:653.67px;top:206.89px;font-size:8.6px;line-height:normal;white-space:pre;color:#4a4a4a;font-weight:400;transform-origin:0 0;transform:scaleX(0.9000)">22.0</div>
<div style="position:absolute;left:761.77px;top:206.89px;font-size:8.6px;line-height:normal;white-space:pre;color:#4a4a4a;font-weight:400;transform-origin:0 0;transform:scaleX(0.9000)">46.0</div>
<div style="position:absolute;left:4px;top:217.56px;width:832.6px;height:11.79px;background:#dfe7f5;"></div>
<div style="position:absolute;left:5.78px;top:218.68px;font-size:8.6px;line-height:normal;white-space:pre;color:#4a4a4a;font-weight:400;transform-origin:0 0;transform:scaleX(0.9000)">8</div>
<div style="position:absolute;left:69.58px;top:218.68px;font-size:8.6px;line-height:normal;white-space:pre;color:#4a4a4a;font-weight:400;transform-origin:0 0;transform:scaleX(0.9000)">Octavio</div>
<div style="position:absolute;left:197.18px;top:218.68px;font-size:8.6px;line-height:normal;white-space:pre;color:#4a4a4a;font-weight:400;transform-origin:0 0;transform:scaleX(0.9000)">Hombre</div>
<div style="position:absolute;left:260.77px;top:218.68px;font-size:8.6px;line-height:normal;white-space:pre;color:#4a4a4a;font-weight:400;transform-origin:0 0;transform:scaleX(0.9000)">Galán</div>
<div style="position:absolute;left:324.47px;top:218.68px;font-size:8.6px;line-height:normal;white-space:pre;color:#4a4a4a;font-weight:400;transform-origin:0 0;transform:scaleX(0.9000)">3</div>
<div style="position:absolute;left:403.47px;top:218.68px;font-size:8.6px;line-height:normal;white-space:pre;color:#4a4a4a;font-weight:400;transform-origin:0 0;transform:scaleX(0.9000)">3</div>
<div style="position:absolute;left:474.57px;top:218.68px;font-size:8.6px;line-height:normal;white-space:pre;color:#4a4a4a;font-weight:400;transform-origin:0 0;transform:scaleX(0.9000)">6</div>
<div style="position:absolute;left:538.77px;top:218.68px;font-size:8.6px;line-height:normal;white-space:pre;color:#4a4a4a;font-weight:400;transform-origin:0 0;transform:scaleX(0.9000)">8.0</div>
<div style="position:absolute;left:653.67px;top:218.68px;font-size:8.6px;line-height:normal;white-space:pre;color:#4a4a4a;font-weight:400;transform-origin:0 0;transform:scaleX(0.9000)">9.0</div>
<div style="position:absolute;left:761.77px;top:218.68px;font-size:8.6px;line-height:normal;white-space:pre;color:#4a4a4a;font-weight:400;transform-origin:0 0;transform:scaleX(0.9000)">17.0</div>
<div style="position:absolute;left:5.78px;top:230.47px;font-size:8.6px;line-height:normal;white-space:pre;color:#4a4a4a;font-weight:400;transform-origin:0 0;transform:scaleX(0.9000)">9</div>
<div style="position:absolute;left:69.58px;top:230.47px;font-size:8.6px;line-height:normal;white-space:pre;color:#4a4a4a;font-weight:400;transform-origin:0 0;transform:scaleX(0.9000)">Julio</div>
<div style="position:absolute;left:197.18px;top:230.47px;font-size:8.6px;line-height:normal;white-space:pre;color:#4a4a4a;font-weight:400;transform-origin:0 0;transform:scaleX(0.9000)">Hombre</div>
<div style="position:absolute;left:260.77px;top:230.47px;font-size:8.6px;line-height:normal;white-space:pre;color:#4a4a4a;font-weight:400;transform-origin:0 0;transform:scaleX(0.9000)">Criado</div>
<div style="position:absolute;left:324.47px;top:230.47px;font-size:8.6px;line-height:normal;white-space:pre;color:#4a4a4a;font-weight:400;transform-origin:0 0;transform:scaleX(0.9000)">3</div>
<div style="position:absolute;left:403.47px;top:230.47px;font-size:8.6px;line-height:normal;white-space:pre;color:#4a4a4a;font-weight:400;transform-origin:0 0;transform:scaleX(0.9000)">1</div>
<div style="position:absolute;left:474.57px;top:230.47px;font-size:8.6px;line-height:normal;white-space:pre;color:#4a4a4a;font-weight:400;transform-origin:0 0;transform:scaleX(0.9000)">4</div>
<div style="position:absolute;left:538.77px;top:230.47px;font-size:8.6px;line-height:normal;white-space:pre;color:#4a4a4a;font-weight:400;transform-origin:0 0;transform:scaleX(0.9000)">8.0</div>
<div style="position:absolute;left:653.67px;top:230.47px;font-size:8.6px;line-height:normal;white-space:pre;color:#4a4a4a;font-weight:400;transform-origin:0 0;transform:scaleX(0.9000)">4.0</div>
<div style="position:absolute;left:761.77px;top:230.47px;font-size:8.6px;line-height:normal;white-space:pre;color:#4a4a4a;font-weight:400;transform-origin:0 0;transform:scaleX(0.9000)">12.0</div>
<div style="position:absolute;left:324.8px;top:97.4px;width:75.39999999999998px;height:12.299999999999997px;box-sizing:border-box;border:2px solid #e4000c"></div>
<div style="position:absolute;left:405.0px;top:94.4px;width:67.39999999999998px;height:14.799999999999997px;box-sizing:border-box;border:2px solid #e4000c"></div>
<div style="position:absolute;left:489.0px;top:94.4px;width:32.799999999999955px;height:16.799999999999997px;box-sizing:border-box;border:2px solid #e4000c"></div>
<div style="position:absolute;left:540.0px;top:95.3px;width:109.79999999999995px;height:14.700000000000003px;box-sizing:border-box;border:2px solid #e4000c"></div>
<div style="position:absolute;left:655.0px;top:96.5px;width:105.79999999999995px;height:13.200000000000003px;box-sizing:border-box;border:2px solid #e4000c"></div>
<div style="position:absolute;left:764.2px;top:96.3px;width:69.5px;height:14.299999999999997px;box-sizing:border-box;border:2px solid #e4000c"></div>
<div style="position:absolute;left:3px;top:412.1px;width:833px;height:65px;background:#f1f1f1;"></div>
<div style="position:absolute;left:3px;top:410.9px;width:833px;height:2.1px;background:#d6d6d6;"></div>
<div style="position:absolute;left:2.3px;top:476.6px;width:835px;height:1.9px;background:#d6d6d6;"></div>
<div style="position:absolute;left:2.3px;top:59.2px;width:1.8px;height:418px;background:#d9d9d9;"></div>
<div style="position:absolute;left:836.6px;top:77px;width:1.3px;height:400.5px;background:#d8d8d8;"></div>
<div style="position:absolute;left:829.5px;top:412.5px;width:6.5px;height:64px;background:#e9e9e9;"></div>
<div style="position:absolute;left:829.5px;top:412.5px;width:6.5px;height:29.5px;background:#c9c9c9;"></div>
<div style="position:absolute;left:0px;top:492.5px;width:840px;height:1.5px;background:#505050;"></div>
<div style="position:absolute;left:32px;top:425.2px;width:49.400000000000006px;height:50.80000000000001px;box-sizing:border-box;border:0.8px solid #e0e0e0;background:#ffffff"></div>
<div style="position:absolute;left:34.78px;top:453.12px;font-size:8.6px;line-height:normal;white-space:pre;color:#555;font-weight:400;transform-origin:0 0;transform:scaleX(0.8974)">Añadir nueva</div>
<div style="position:absolute;left:44.08px;top:463.12px;font-size:8.6px;line-height:normal;white-space:pre;color:#555;font-weight:400;transform-origin:0 0;transform:scaleX(0.8942)">columna</div>
<svg style="position:absolute;left:51.6px;top:432.8px;overflow:visible" width="11" height="11" viewBox="0 0 11 11"><defs><linearGradient id="cg" x1="0" y1="0" x2="0" y2="1"><stop offset="0" stop-color="#f4f7f7"/><stop offset="1" stop-color="#dfe5e6"/></linearGradient></defs><rect x="0.3" y="0.3" width="10.4" height="10.6" rx="1.3" fill="url(#cg)" stroke="#b9c3c5" stroke-width="0.6"/><path d="M4.5 1.5 V9.8 M7.6 1.5 V9.8" stroke="#dde4e4" stroke-width="0.5"/><path d="M2.9 9.4 V3 H8.6" stroke="#3ccaf7" stroke-width="1.6" stroke-linecap="round" fill="none"/><path d="M5.9 9.2 V2.8" stroke="#1fc21f" stroke-width="1.4" stroke-linecap="round"/><circle cx="5.9" cy="1.4" r="0.7" fill="#1fc21f" opacity="0.6"/></svg>
<div style="position:absolute;left:99.5px;top:425.2px;width:45.099999999999994px;height:50.80000000000001px;box-sizing:border-box;border:0.8px solid #e0e0e0;background:#ffffff"></div>
<div style="position:absolute;left:107.68px;top:453.12px;font-size:8.6px;line-height:normal;white-space:pre;color:#555;font-weight:400;transform-origin:0 0;transform:scaleX(0.8688)">Mezclar</div>
<div style="position:absolute;left:105.17px;top:463.12px;font-size:8.6px;line-height:normal;white-space:pre;color:#555;font-weight:400;transform-origin:0 0;transform:scaleX(0.9151)">columnas</div>
<svg style="position:absolute;left:116px;top:434.9px;overflow:visible" width="11.3" height="7.2" viewBox="0 0 11.3 7.2"><path d="M3.3 0.5 H8 C9.8 0.5 10.8 2 10.8 3.6 C10.8 5.2 9.8 6.7 8 6.7 H3.3 C1.5 6.7 0.5 5.2 0.5 3.6 C0.5 2 1.5 0.5 3.3 0.5 Z" fill="#b7c7f4" stroke="#4f6fe0" stroke-width="1"/><path d="M5.65 1.6 V5.6" stroke="#8aa0ea" stroke-width="0.7"/></svg>
<div style="position:absolute;left:161.8px;top:425.2px;width:46.5px;height:50.80000000000001px;box-sizing:border-box;border:0.8px solid #e0e0e0;background:#ffffff"></div>
<div style="position:absolute;left:173.78px;top:453.12px;font-size:8.6px;line-height:normal;white-space:pre;color:#555;font-weight:400;transform-origin:0 0;transform:scaleX(0.8812)">Borrar</div>
<div style="position:absolute;left:166.18px;top:463.12px;font-size:8.6px;line-height:normal;white-space:pre;color:#555;font-weight:400;transform-origin:0 0;transform:scaleX(0.8942)">columna</div>
<svg style="position:absolute;left:178.9px;top:433.0px;overflow:visible" width="11" height="11" viewBox="0 0 11 11"><defs><linearGradient id="cg" x1="0" y1="0" x2="0" y2="1"><stop offset="0" stop-color="#f4f7f7"/><stop offset="1" stop-color="#dfe5e6"/></linearGradient></defs><rect x="0.3" y="0.3" width="10.4" height="10.6" rx="1.3" fill="url(#cg)" stroke="#b9c3c5" stroke-width="0.6"/><path d="M4.5 1.5 V9.8 M7.6 1.5 V9.8" stroke="#dde4e4" stroke-width="0.5"/><path d="M2.9 9.4 V3 H8.6" stroke="#3ccaf7" stroke-width="1.6" stroke-linecap="round" fill="none"/><path d="M5.9 9.2 V2.8" stroke="#d01010" stroke-width="1.4" stroke-linecap="round"/><circle cx="5.9" cy="1.4" r="0.7" fill="#d01010" opacity="0.6"/></svg>
<div style="position:absolute;left:208.3px;top:425.2px;width:61.39999999999998px;height:50.80000000000001px;box-sizing:border-box;border:0.8px solid #e0e0e0;background:#ffffff"></div>
<div style="position:absolute;left:218.38px;top:453.12px;font-size:8.6px;line-height:normal;white-space:pre;color:#555;font-weight:400;transform-origin:0 0;transform:scaleX(0.8998)">Borrar datos</div>
<div style="position:absolute;left:214.77px;top:463.12px;font-size:8.6px;line-height:normal;white-space:pre;color:#555;font-weight:400;transform-origin:0 0;transform:scaleX(0.9265)">de columna</div>
<svg style="position:absolute;left:234.3px;top:433.0px;overflow:visible" width="11" height="11" viewBox="0 0 11 11"><defs><linearGradient id="cg" x1="0" y1="0" x2="0" y2="1"><stop offset="0" stop-color="#f4f7f7"/><stop offset="1" stop-color="#dfe5e6"/></linearGradient></defs><rect x="0.3" y="0.3" width="10.4" height="10.6" rx="1.3" fill="url(#cg)" stroke="#b9c3c5" stroke-width="0.6"/><path d="M4.5 1.5 V9.8 M7.6 1.5 V9.8" stroke="#dde4e4" stroke-width="0.5"/><path d="M2.9 9.4 V3 H8.6" stroke="#3ccaf7" stroke-width="1.6" stroke-linecap="round" fill="none"/><path d="M5.9 9.2 V2.8" stroke="#d01010" stroke-width="1.4" stroke-linecap="round"/><circle cx="5.9" cy="1.4" r="0.7" fill="#d01010" opacity="0.6"/></svg>
<div style="position:absolute;left:269.7px;top:425.2px;width:66.10000000000002px;height:50.80000000000001px;box-sizing:border-box;border:0.8px solid #e0e0e0;background:#ffffff"></div>
<div style="position:absolute;left:278.27px;top:453.12px;font-size:8.6px;line-height:normal;white-space:pre;color:#555;font-weight:400;transform-origin:0 0;transform:scaleX(0.9081)">Copiar datos a</div>
<div style="position:absolute;left:276.77px;top:463.12px;font-size:8.6px;line-height:normal;white-space:pre;color:#555;font-weight:400;transform-origin:0 0;transform:scaleX(0.9272)">otra columna</div>
<svg style="position:absolute;left:297.2px;top:433.0px;overflow:visible" width="11" height="11" viewBox="0 0 11 11"><defs><linearGradient id="cg" x1="0" y1="0" x2="0" y2="1"><stop offset="0" stop-color="#f4f7f7"/><stop offset="1" stop-color="#dfe5e6"/></linearGradient></defs><rect x="0.3" y="0.3" width="10.4" height="10.6" rx="1.3" fill="url(#cg)" stroke="#b9c3c5" stroke-width="0.6"/><path d="M4.5 1.5 V9.8 M7.6 1.5 V9.8" stroke="#dde4e4" stroke-width="0.5"/><path d="M2.9 9.4 V3 H8.6" stroke="#3ccaf7" stroke-width="1.6" stroke-linecap="round" fill="none"/><path d="M5.9 9.2 V2.8" stroke="#4a2d8c" stroke-width="1.4" stroke-linecap="round"/><circle cx="5.9" cy="1.4" r="0.7" fill="#4a2d8c" opacity="0.6"/></svg>
<div style="position:absolute;left:335.8px;top:425.2px;width:64.19999999999999px;height:50.80000000000001px;box-sizing:border-box;border:0.8px solid #e0e0e0;background:#ffffff"></div>
<div style="position:absolute;left:339.08px;top:453.12px;font-size:8.6px;line-height:normal;white-space:pre;color:#555;font-weight:400;transform-origin:0 0;transform:scaleX(0.8799)">Rellenar columna</div>
<div style="position:absolute;left:343.27px;top:463.12px;font-size:8.6px;line-height:normal;white-space:pre;color:#555;font-weight:400;transform-origin:0 0;transform:scaleX(0.9025)">con un valor</div>
<svg style="position:absolute;left:362.9px;top:433.0px;overflow:visible" width="11" height="11" viewBox="0 0 11 11"><defs><linearGradient id="cg" x1="0" y1="0" x2="0" y2="1"><stop offset="0" stop-color="#f4f7f7"/><stop offset="1" stop-color="#dfe5e6"/></linearGradient></defs><rect x="0.3" y="0.3" width="10.4" height="10.6" rx="1.3" fill="url(#cg)" stroke="#b9c3c5" stroke-width="0.6"/><path d="M4.5 1.5 V9.8 M7.6 1.5 V9.8" stroke="#dde4e4" stroke-width="0.5"/><path d="M2.9 9.4 V3 H8.6" stroke="#3ccaf7" stroke-width="1.6" stroke-linecap="round" fill="none"/><path d="M5.9 9.2 V2.8" stroke="#4a2d8c" stroke-width="1.4" stroke-linecap="round"/><circle cx="5.9" cy="1.4" r="0.7" fill="#4a2d8c" opacity="0.6"/></svg>
<div style="position:absolute;left:400px;top:425.2px;width:48.60000000000002px;height:50.80000000000001px;box-sizing:border-box;border:0.8px solid #e0e0e0;background:#ffffff"></div>
<div style="position:absolute;left:409.58px;top:453.12px;font-size:8.6px;line-height:normal;white-space:pre;color:#555;font-weight:400;transform-origin:0 0;transform:scaleX(0.8833)">Duplicar</div>
<div style="position:absolute;left:404.87px;top:463.12px;font-size:8.6px;line-height:normal;white-space:pre;color:#555;font-weight:400;transform-origin:0 0;transform:scaleX(0.9099)">columna</div>
<svg style="position:absolute;left:418.3px;top:433.0px;overflow:visible" width="11" height="11" viewBox="0 0 11 11"><defs><linearGradient id="cg" x1="0" y1="0" x2="0" y2="1"><stop offset="0" stop-color="#f4f7f7"/><stop offset="1" stop-color="#dfe5e6"/></linearGradient></defs><rect x="0.3" y="0.3" width="10.4" height="10.6" rx="1.3" fill="url(#cg)" stroke="#b9c3c5" stroke-width="0.6"/><path d="M4.5 1.5 V9.8 M7.6 1.5 V9.8" stroke="#dde4e4" stroke-width="0.5"/><path d="M2.9 9.4 V3 H8.6" stroke="#3ccaf7" stroke-width="1.6" stroke-linecap="round" fill="none"/><path d="M5.9 9.2 V2.8" stroke="#4a2d8c" stroke-width="1.4" stroke-linecap="round"/><circle cx="5.9" cy="1.4" r="0.7" fill="#4a2d8c" opacity="0.6"/></svg>
<div style="position:absolute;left:465.6px;top:425.2px;width:109.89999999999998px;height:50.80000000000001px;box-sizing:border-box;border:0.8px solid #e0e0e0;background:#ffffff"></div>
<div style="position:absolute;left:475.48px;top:453.12px;font-size:8.6px;line-height:normal;white-space:pre;color:#555;font-weight:400;transform-origin:0 0;transform:scaleX(0.8970)">Crear columna booleana a</div>
<div style="position:absolute;left:471.17px;top:463.12px;font-size:8.6px;line-height:normal;white-space:pre;color:#555;font-weight:400;transform-origin:0 0;transform:scaleX(0.9237)">partir de expresión regular</div>
<svg style="position:absolute;left:516.2px;top:433.6px;overflow:visible" width="11" height="11" viewBox="0 0 11 11"><path d="M0.2 9.4 V4.2 C0.2 2.8 0.8 2 1.3 1.4 V0.5 H2.9 V1.4 C3.5 2 4 2.8 4 4.2 V9.4 Z" fill="#222"/><path d="M5.4 9.4 V4.2 C5.4 2.8 6 2 6.5 1.4 V0.5 H8.1 V1.4 C8.7 2 9.2 2.8 9.2 4.2 V9.4 Z" fill="#2a2a2a"/><rect x="3.6" y="1.8" width="2.2" height="2.6" fill="#333"/><rect x="0.8" y="3.5" width="1" height="5" fill="#666"/><rect x="0.2" y="8" width="3.8" height="1.4" fill="#000"/><ellipse cx="7.6" cy="8.3" rx="2.5" ry="1.9" fill="#2b9ef0"/></svg>
<div style="position:absolute;left:575.5px;top:425.2px;width:151.0px;height:50.80000000000001px;box-sizing:border-box;border:0.8px solid #e0e0e0;background:#ffffff"></div>
<div style="position:absolute;left:591.67px;top:453.12px;font-size:8.6px;line-height:normal;white-space:pre;color:#555;font-weight:400;transform-origin:0 0;transform:scaleX(0.9135)">Crear columna con lista de grupos</div>
<div style="position:absolute;left:580.98px;top:463.12px;font-size:8.6px;line-height:normal;white-space:pre;color:#555;font-weight:400;transform-origin:0 0;transform:scaleX(0.8948)">que se ajustan a una expresión regular</div>
<svg style="position:absolute;left:647.1px;top:433.6px;overflow:visible" width="11" height="11" viewBox="0 0 11 11"><path d="M0.2 9.4 V4.2 C0.2 2.8 0.8 2 1.3 1.4 V0.5 H2.9 V1.4 C3.5 2 4 2.8 4 4.2 V9.4 Z" fill="#222"/><path d="M5.4 9.4 V4.2 C5.4 2.8 6 2 6.5 1.4 V0.5 H8.1 V1.4 C8.7 2 9.2 2.8 9.2 4.2 V9.4 Z" fill="#2a2a2a"/><rect x="3.6" y="1.8" width="2.2" height="2.6" fill="#333"/><rect x="0.8" y="3.5" width="1" height="5" fill="#666"/><rect x="0.2" y="8" width="3.8" height="1.4" fill="#000"/><ellipse cx="7.6" cy="8.3" rx="2.5" ry="1.9" fill="#2b9ef0"/></svg>
<div style="position:absolute;left:743.6px;top:425.2px;width:57.799999999999955px;height:50.80000000000001px;box-sizing:border-box;border:0.8px solid #dedede;background:#f2f2f2"></div>
<div style="position:absolute;left:746.02px;top:453.12px;font-size:8.6px;line-height:normal;white-space:pre;color:#b0b0b0;font-weight:400;transform-origin:0 0;transform:scaleX(0.9087)">Negar columna</div>
<div style="position:absolute;left:752.27px;top:463.12px;font-size:8.6px;line-height:normal;white-space:pre;color:#b0b0b0;font-weight:400;transform-origin:0 0;transform:scaleX(0.9092)">booleana</div>
<svg style="position:absolute;left:767.7px;top:435px;overflow:visible" width="9" height="8.5" viewBox="0 0 9 8.5"><rect x="0.5" y="3" width="5" height="5" fill="none" stroke="#bcbcbc" stroke-width="0.7"/><rect x="3.5" y="0.5" width="5" height="5" fill="#f7f7f7" stroke="#c4c4c4" stroke-width="0.7"/><path d="M1.5 5.5 H3.5" stroke="#888" stroke-width="0.7"/></svg>
<svg style="position:absolute;left:197.9px;top:466.0px;overflow:visible" width="4.5" height="3" viewBox="0 0 4.5 3"><path d="M0.5 0.6 L2.25 2.4 L4 0.6" stroke="#555" stroke-width="0.95" fill="none"/></svg>
<svg style="position:absolute;left:258.6px;top:466.0px;overflow:visible" width="4.5" height="3" viewBox="0 0 4.5 3"><path d="M0.5 0.6 L2.25 2.4 L4 0.6" stroke="#555" stroke-width="0.95" fill="none"/></svg>
<svg style="position:absolute;left:325.4px;top:466.0px;overflow:visible" width="4.5" height="3" viewBox="0 0 4.5 3"><path d="M0.5 0.6 L2.25 2.4 L4 0.6" stroke="#555" stroke-width="0.95" fill="none"/></svg>
<svg style="position:absolute;left:388.4px;top:466.0px;overflow:visible" width="4.5" height="3" viewBox="0 0 4.5 3"><path d="M0.5 0.6 L2.25 2.4 L4 0.6" stroke="#555" stroke-width="0.95" fill="none"/></svg>
<svg style="position:absolute;left:437.8px;top:466.0px;overflow:visible" width="4.5" height="3" viewBox="0 0 4.5 3"><path d="M0.5 0.6 L2.25 2.4 L4 0.6" stroke="#555" stroke-width="0.95" fill="none"/></svg>
<svg style="position:absolute;left:565.7px;top:466.0px;overflow:visible" width="4.5" height="3" viewBox="0 0 4.5 3"><path d="M0.5 0.6 L2.25 2.4 L4 0.6" stroke="#555" stroke-width="0.95" fill="none"/></svg>
<svg style="position:absolute;left:715.5px;top:466.0px;overflow:visible" width="4.5" height="3" viewBox="0 0 4.5 3"><path d="M0.5 0.6 L2.25 2.4 L4 0.6" stroke="#555" stroke-width="0.95" fill="none"/></svg>
<svg style="position:absolute;left:787.1px;top:466.0px;overflow:visible" width="4.5" height="3" viewBox="0 0 4.5 3"><path d="M0.5 0.6 L2.25 2.4 L4 0.6" stroke="#aaa" stroke-width="0.95" fill="none"/></svg>
</body></html>
